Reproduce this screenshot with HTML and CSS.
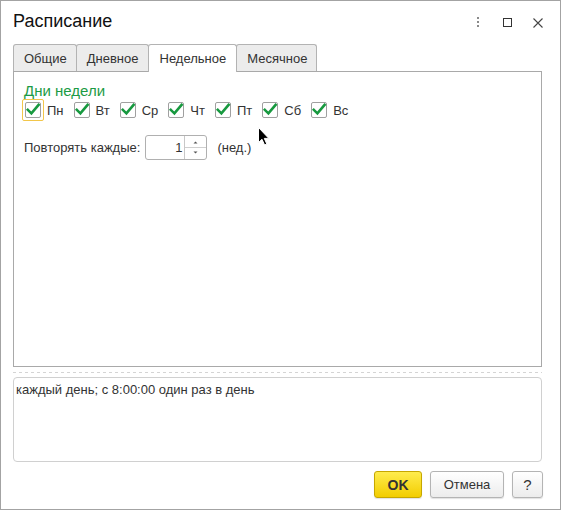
FILE: index.html
```html
<!DOCTYPE html>
<html lang="ru">
<head>
<meta charset="utf-8">
<title>Расписание</title>
<link rel="stylesheet" href="styles.css">
</head>
<body>
<div class="window">
  <div class="header">
    <div class="title">Расписание</div>
    <div class="controls">
      <div class="ctl">
        <svg width="4" height="11" viewBox="0 0 4 11"><rect x="1" y="0" width="2" height="2" fill="#8a8a8a"/><rect x="1" y="4" width="2" height="2" fill="#8a8a8a"/><rect x="1" y="8" width="2" height="2" fill="#8a8a8a"/></svg>
      </div>
      <div class="ctl">
        <svg width="10" height="10" viewBox="0 0 10 10"><rect x="0.5" y="0.5" width="8" height="8" fill="none" stroke="#333" stroke-width="1"/></svg>
      </div>
      <div class="ctl">
        <svg width="10" height="10" viewBox="0 0 10 10"><path d="M0.5 0.5 L9.5 9.5 M9.5 0.5 L0.5 9.5" stroke="#444" stroke-width="1.1" fill="none"/></svg>
      </div>
    </div>
  </div>

  <div class="tabs">
    <div class="tab">Общие</div>
    <div class="tab">Дневное</div>
    <div class="tab active">Недельное</div>
    <div class="tab">Месячное</div>
  </div>

  <div class="panel">
    <div class="group-title">Дни недели</div>
    <div class="days">
      <div class="day"><div class="cb-frame focused"><div class="cb"><svg class="check" width="16" height="16" viewBox="0 0 16 16"><path d="M2.8 7.8 L6.4 11.4 L13.6 2.8" /></svg></div></div><span class="day-label">Пн</span></div>
      <div class="day"><div class="cb-frame"><div class="cb"><svg class="check" width="16" height="16" viewBox="0 0 16 16"><path d="M2.8 7.8 L6.4 11.4 L13.6 2.8" /></svg></div></div><span class="day-label">Вт</span></div>
      <div class="day"><div class="cb-frame"><div class="cb"><svg class="check" width="16" height="16" viewBox="0 0 16 16"><path d="M2.8 7.8 L6.4 11.4 L13.6 2.8" /></svg></div></div><span class="day-label">Ср</span></div>
      <div class="day"><div class="cb-frame"><div class="cb"><svg class="check" width="16" height="16" viewBox="0 0 16 16"><path d="M2.8 7.8 L6.4 11.4 L13.6 2.8" /></svg></div></div><span class="day-label">Чт</span></div>
      <div class="day"><div class="cb-frame"><div class="cb"><svg class="check" width="16" height="16" viewBox="0 0 16 16"><path d="M2.8 7.8 L6.4 11.4 L13.6 2.8" /></svg></div></div><span class="day-label">Пт</span></div>
      <div class="day"><div class="cb-frame"><div class="cb"><svg class="check" width="16" height="16" viewBox="0 0 16 16"><path d="M2.8 7.8 L6.4 11.4 L13.6 2.8" /></svg></div></div><span class="day-label">Сб</span></div>
      <div class="day"><div class="cb-frame"><div class="cb"><svg class="check" width="16" height="16" viewBox="0 0 16 16"><path d="M2.8 7.8 L6.4 11.4 L13.6 2.8" /></svg></div></div><span class="day-label">Вс</span></div>
    </div>
    <div class="repeat">
      <span class="repeat-label">Повторять каждые:</span>
      <div class="spin">
        <div class="spin-value">1</div>
        <div class="spin-btns">
          <svg width="21" height="23" viewBox="0 0 21 23">
            <path d="M8.5 7.5 L10.5 5.5 L12.5 7.5 Z" fill="#555"/>
            <line x1="0" y1="11.5" x2="21" y2="11.5" stroke="#cfcfcf" stroke-width="1"/>
            <path d="M8.5 15.5 L10.5 17.5 L12.5 15.5 Z" fill="#555"/>
          </svg>
        </div>
      </div>
      <span class="unit">(нед.)</span>
    </div>
  </div>

  <div class="sep"></div>

  <div class="desc">каждый день; с 8:00:00 один раз в день</div>

  <div class="buttons">
    <div class="btn ok">OK</div>
    <div class="btn cancel">Отмена</div>
    <div class="btn help">?</div>
  </div>

  <svg class="cursor" width="12" height="19" viewBox="0 0 12 19"><path d="M0.5 0.5 L0.5 15.5 L4 12.3 L6.6 18 L8.8 17 L6.3 11.4 L10.8 11.4 Z" fill="#000" stroke="#fff" stroke-width="1"/></svg>
</div>
</body>
</html>
```

FILE: styles.css
```css
* {
  box-sizing: border-box;
}

body {
  margin: 0;
  font-family: "Liberation Sans", Arial, sans-serif;
  font-size: 13px;
  color: #333;
  background: #fff;
}

.window {
  position: relative;
  width: 561px;
  height: 510px;
  border: 1px solid #a3a3a3;
  padding: 0 18px 0 12px;
  display: flex;
  flex-direction: column;
}

.header {
  height: 43px;
  display: flex;
  align-items: flex-start;
}

.title {
  flex: 1;
  font-size: 18px;
  line-height: 22px;
  padding-top: 9px;
  color: #111;
}

.controls {
  display: flex;
  margin-right: -11px;
  padding-top: 16px;
}

.ctl {
  width: 30px;
  height: 11px;
  display: flex;
  align-items: center;
  justify-content: center;
}

.ctl svg {
  display: block;
}

.tabs {
  position: relative;
  z-index: 1;
  display: flex;
  align-items: flex-start;
  height: 27px;
}

.tab {
  height: 27px;
  border: 1px solid #b3b3b3;
  border-bottom: none;
  border-radius: 3px 3px 0 0;
  background: #ececec;
  padding: 6px 9px 0 10px;
  line-height: 15px;
  margin-right: -1px;
  color: #333;
}

.tab.active {
  background: #fff;
  height: 28px;
  padding: 6px 10px 0 11px;
}

.panel {
  height: 296px;
  border: 1px solid #a9a9a9;
  padding: 10px 10px 0;
}

.group-title {
  font-size: 15px;
  line-height: 17px;
  color: #1c9b45;
}

.days {
  display: flex;
  align-items: center;
  gap: 7px;
  margin-left: -2px;
  height: 22px;
}

.day {
  display: flex;
  align-items: center;
}

.cb-frame {
  width: 22px;
  height: 22px;
  border: 1px solid transparent;
  border-radius: 2px;
  padding: 2px;
}

.cb-frame.focused {
  border-color: #f2c64a;
}

.cb {
  width: 16px;
  height: 16px;
  border: 1px solid #a0a0a0;
  border-radius: 2px;
  background: #fff;
  position: relative;
}

.check {
  position: absolute;
  left: -1px;
  top: -1px;
  overflow: visible;
}

.check path {
  fill: none;
  stroke: #17993f;
  stroke-width: 2.6;
  stroke-linecap: square;
}

.day-label {
  margin-left: 3px;
  line-height: 15px;
}

.repeat {
  display: flex;
  align-items: center;
  margin-top: 14px;
  height: 25px;
}

.repeat-label {
  margin-right: 5px;
}

.spin {
  width: 62px;
  height: 25px;
  border: 1px solid #b0b0b0;
  border-radius: 3px;
  display: flex;
}

.spin-value {
  flex: 1;
  text-align: right;
  padding-right: 2px;
  line-height: 23px;
}

.spin-btns {
  width: 22px;
  border-left: 1px solid #c8c8c8;
}

.spin-btns svg {
  display: block;
}

.unit {
  margin-left: 10px;
}

.sep {
  margin-top: 5px;
  height: 1px;
  background: repeating-linear-gradient(90deg, #d4d4d4 0 3px, transparent 3px 6px);
}

.desc {
  margin-top: 4px;
  height: 85px;
  border: 1px solid #d0d0d0;
  border-radius: 4px;
  padding: 4px 2px;
  line-height: 15px;
  color: #333;
}

.buttons {
  margin-top: 9px;
  margin-right: -1px;
  display: flex;
  justify-content: flex-end;
  gap: 8px;
}

.btn {
  height: 27px;
  border: 1px solid #b4b4b4;
  border-radius: 3px;
  background: linear-gradient(#ffffff, #ececec);
  box-shadow: 0 1px 1px rgba(0, 0, 0, 0.12);
  display: flex;
  align-items: center;
  justify-content: center;
  color: #333;
}

.ok {
  width: 48px;
  background: linear-gradient(#ffec4d, #f2cd00);
  border-color: #c6a700;
  font-weight: bold;
  font-size: 14px;
}

.cancel {
  width: 74px;
}

.help {
  width: 31px;
  font-size: 15px;
}

.cursor {
  position: absolute;
  left: 257px;
  top: 126px;
}
```
